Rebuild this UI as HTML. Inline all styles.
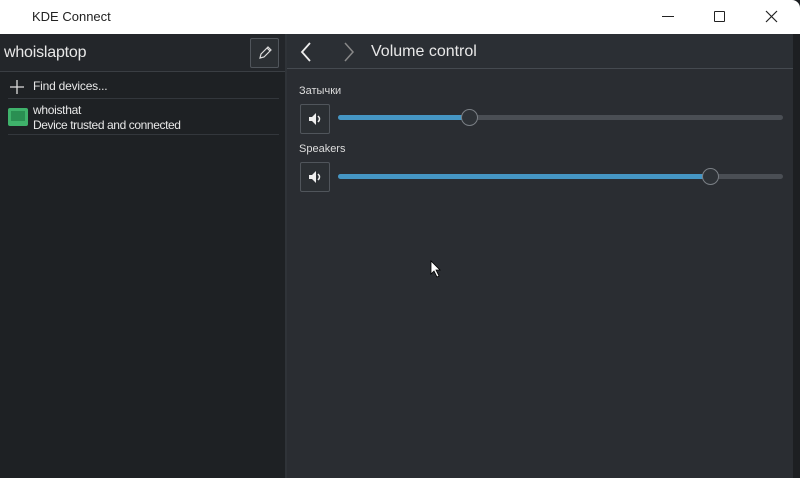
<!DOCTYPE html>
<html><head><meta charset="utf-8"><style>
*{margin:0;padding:0;box-sizing:border-box}
body{width:800px;height:478px;overflow:hidden;background:#1b1e21;font-family:"Liberation Sans","DejaVu Sans",sans-serif;position:relative}
.title{position:absolute;left:0;top:0;width:800px;height:34px;background:#fff;border-top-right-radius:8px}
.title .t{position:absolute;left:32px;top:9px;font-size:13px;color:#222}
.left{position:absolute;left:0;top:34px;width:285px;height:444px;background:#1e2124}
.sep{position:absolute;left:285px;top:34px;width:2px;height:444px;background:#2f3338}
.right{position:absolute;left:287px;top:34px;width:506px;height:444px;background:#2a2d32}
.edge{position:absolute;left:793px;top:34px;width:7px;height:444px;background:#1d1f22}
.lh{position:absolute;left:0;top:0;width:285px;height:38px;background:#23262a;border-bottom:1px solid #3a3e43}
.rh{position:absolute;left:0;top:0;width:506px;height:35px;background:#2b2f34;border-bottom:1px solid #454a50}
.btn{position:absolute;border:1px solid #50555b;border-radius:2px;background:#2b2f33}
.txt{position:absolute;color:#e8e8e8;white-space:nowrap}
.track{position:absolute;height:5px;border-radius:3px;background:#4a4e54}
.fill{position:absolute;height:5px;border-radius:3px;background:#4596c4}
.knob{position:absolute;width:17px;height:17px;border-radius:50%;background:#2e3237;border:1px solid #7a7f85}
</style></head><body>
<div class="title"><span class="t">KDE Connect</span>
<div style="position:absolute;left:662px;top:16px;width:12px;height:1px;background:#222"></div>
<div style="position:absolute;left:714px;top:11px;width:11px;height:11px;border:1px solid #222;border-radius:1px"></div>
<svg style="position:absolute;left:765px;top:10px" width="13" height="13"><path d="M1 1L12 12M12 1L1 12" stroke="#222" stroke-width="1.2"/></svg>
</div>
<div class="left">
 <div class="lh"><span class="txt" style="left:4px;top:10px;font-size:16px;letter-spacing:-0.2px">whoislaptop</span>
  <div class="btn" style="left:250px;top:4px;width:29px;height:30px"><svg width="27" height="28"><path d="M9 19l1-4 7-7 3 3-7 7z M16 9l3 3" fill="none" stroke="#ddd" stroke-width="1.2"/></svg></div>
 </div>
 <svg style="position:absolute;left:10px;top:46px" width="14" height="14"><path d="M7 0V14M0 7H14" stroke="#ddd" stroke-width="1.3"/></svg>
 <span class="txt" style="left:33px;top:45px;font-size:12px;letter-spacing:-0.2px">Find devices...</span>
 <div style="position:absolute;left:8px;top:64px;width:271px;height:1px;background:#33373c"></div>
 <div style="position:absolute;left:8px;top:74px;width:20px;height:18px;background:#3fb26b;border-radius:2px"><div style="position:absolute;left:3px;top:3px;width:14px;height:10px;background:#2a8f52"></div></div>
 <span class="txt" style="left:33px;top:69px;font-size:12px;letter-spacing:-0.3px">whoisthat</span>
 <span class="txt" style="left:33px;top:84px;font-size:12px;letter-spacing:-0.4px">Device trusted and connected</span>
 <div style="position:absolute;left:8px;top:100px;width:271px;height:1px;background:#33373c"></div>
</div>
<div class="sep"></div>
<div class="right">
 <div class="rh">
  <svg style="position:absolute;left:13px;top:8px" width="12" height="20"><path d="M10 1L2 10L10 19" fill="none" stroke="#eee" stroke-width="1.8"/></svg>
  <svg style="position:absolute;left:56px;top:8px" width="12" height="20"><path d="M2 1L10 10L2 19" fill="none" stroke="#888" stroke-width="1.5"/></svg>
  <span class="txt" style="left:84px;top:9px;font-size:16px">Volume control</span>
 </div>
 <span class="txt" style="left:12px;top:51px;font-size:11px;color:#ddd">Затычки</span>
 <div class="btn" style="left:13px;top:70px;width:30px;height:30px"></div>
 <svg style="position:absolute;left:20px;top:77px" width="16" height="16"><path d="M2 6h3l4-4v12l-4-4H2z" fill="#eee"/><path d="M11 5q3 3 0 6" fill="none" stroke="#eee" stroke-width="1.5"/></svg>
 <div class="track" style="left:51px;top:81px;width:445px"></div>
 <div class="fill" style="left:51px;top:81px;width:132px"></div>
 <div class="knob" style="left:174px;top:75px"></div>
 <span class="txt" style="left:12px;top:109px;font-size:11px;color:#ddd">Speakers</span>
 <div class="btn" style="left:13px;top:128px;width:30px;height:30px"></div>
 <svg style="position:absolute;left:20px;top:135px" width="16" height="16"><path d="M2 6h3l4-4v12l-4-4H2z" fill="#eee"/><path d="M11 5q3 3 0 6" fill="none" stroke="#eee" stroke-width="1.5"/></svg>
 <div class="track" style="left:51px;top:140px;width:445px"></div>
 <div class="fill" style="left:51px;top:140px;width:374px"></div>
 <div class="knob" style="left:415px;top:134px"></div>
 <svg style="position:absolute;left:143px;top:226px" width="12" height="18"><path d="M1 1V14L4 11L7 17L9 16L6 10H10Z" fill="#fff" stroke="#000" stroke-width="0.8"/></svg>
</div>
<div class="edge"></div>
</body></html>
